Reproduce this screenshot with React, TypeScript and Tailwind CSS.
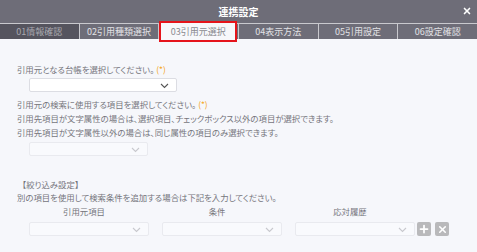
import { X, Plus } from "lucide-react"

const TABS = ["01情報確認", "02引用種類選択", "03引用元選択", "04表示方法", "05引用設定", "06設定確認"]

function Chevron({ dark }: { dark?: boolean }) {
    return (
        <svg width="9" height="6" viewBox="0 0 9 6" className="absolute right-[7px] top-[4px]">
            <path d="M1 1 L4.5 4.5 L8 1" fill="none" stroke={dark ? "#555" : "#c8c9ce"} strokeWidth="1.1" />
        </svg>
    )
}

function Select({ width, enabled }: { width: string; enabled?: boolean }) {
    return (
        <div
            className={`relative h-[14px] rounded-[2px] border ${width} ${
                enabled ? "bg-white border-[#dcdde3]" : "bg-[#f9fafd] border-[#e9eaef]"
            }`}
        >
            <Chevron dark={enabled} />
        </div>
    )
}

export default function App() {
    return (
        <div
            className="w-[477px] h-[252px] flex flex-col bg-[#f6f7fb] overflow-hidden [font-feature-settings:'palt']"
            style={{ fontFamily: '"Noto Sans CJK JP", "Noto Sans", sans-serif' }}
        >
            <div className="h-[23px] bg-[#6e6d78] relative flex items-center justify-center">
                <span className="text-white font-bold text-[10px] leading-none">連携設定</span>
                <X className="absolute right-[5px] top-[6px] w-[10px] h-[10px] text-white" strokeWidth={4} />
            </div>

            <div className="h-[16px] flex bg-[#6e6d78] border-t border-[#c9c9ce]">
                {TABS.map((t, i) => (
                    <div
                        key={t}
                        className={`relative flex-1 flex items-center justify-center text-[9px] leading-none ${
                            i > 0 ? "border-l border-[#c9c9ce]" : ""
                        } ${i === 0 ? "bg-[#55545e] text-[#a9a9b0]" : "text-[#e2e2e6]"}`}
                    >
                        {i === 2 ? (
                            <div className="absolute left-[0px] right-[1px] top-[-3px] bottom-[-3px] bg-[#f7f8fb] border-2 border-[#e5141b] flex items-center justify-center text-[#8a8a90]">
                                {t}
                            </div>
                        ) : (
                            t
                        )}
                    </div>
                ))}
            </div>

            <div className="flex-1 pl-[17px] pt-[23px] text-[8.4px] leading-[14px] text-[#75757b]">
                <p>
                    引用元となる台帳を選択してください。<span className="ml-[2px] text-[#f5a623]">(*)</span>
                </p>
                <div className="ml-[12px] mt-[2px]">
                    <Select width="w-[148px]" enabled />
                </div>
                <p className="mt-[5px]">
                    引用元の検索に使用する項目を選択してください。<span className="ml-[2px] text-[#f5a623]">(*)</span>
                </p>
                <p>引用先項目が文字属性の場合は、選択項目、チェックボックス以外の項目が選択できます。</p>
                <p>引用先項目が文字属性以外の場合は、同じ属性の項目のみ選択できます。</p>
                <div className="ml-[12px] mt-[3px]">
                    <Select width="w-[119px]" />
                </div>

                <p className="mt-[21px] ml-[5px]">【絞り込み設定】</p>
                <p className="-mt-[1px]">別の項目を使用して検索条件を追加する場合は下記を入力してください。</p>
                <div className="ml-[12px] flex items-end">
                    {["引用元項目", "条件", "応対履歴"].map((h, i) => (
                        <div key={h} className={`flex flex-col ${i < 2 ? "w-[133px]" : ""}`}>
                            <span className="w-[110px] text-center">{h}</span>
                            <div className="mt-[4px] flex items-center gap-[2px]">
                                <Select width="w-[120px]" />
                                {i === 2 && (
                                    <>
                                        <div className="w-[14px] h-[14px] rounded-[2px] bg-[#b9b9bb] flex items-center justify-center">
                                            <Plus className="w-[12px] h-[12px] text-white" strokeWidth={3.5} />
                                        </div>
                                        <div className="w-[14px] h-[14px] rounded-[2px] bg-[#b9b9bb] flex items-center justify-center ml-[2px]">
                                            <X className="w-[11px] h-[11px] text-white" strokeWidth={3.5} />
                                        </div>
                                    </>
                                )}
                            </div>
                        </div>
                    ))}
                </div>
            </div>
        </div>
    )
}
